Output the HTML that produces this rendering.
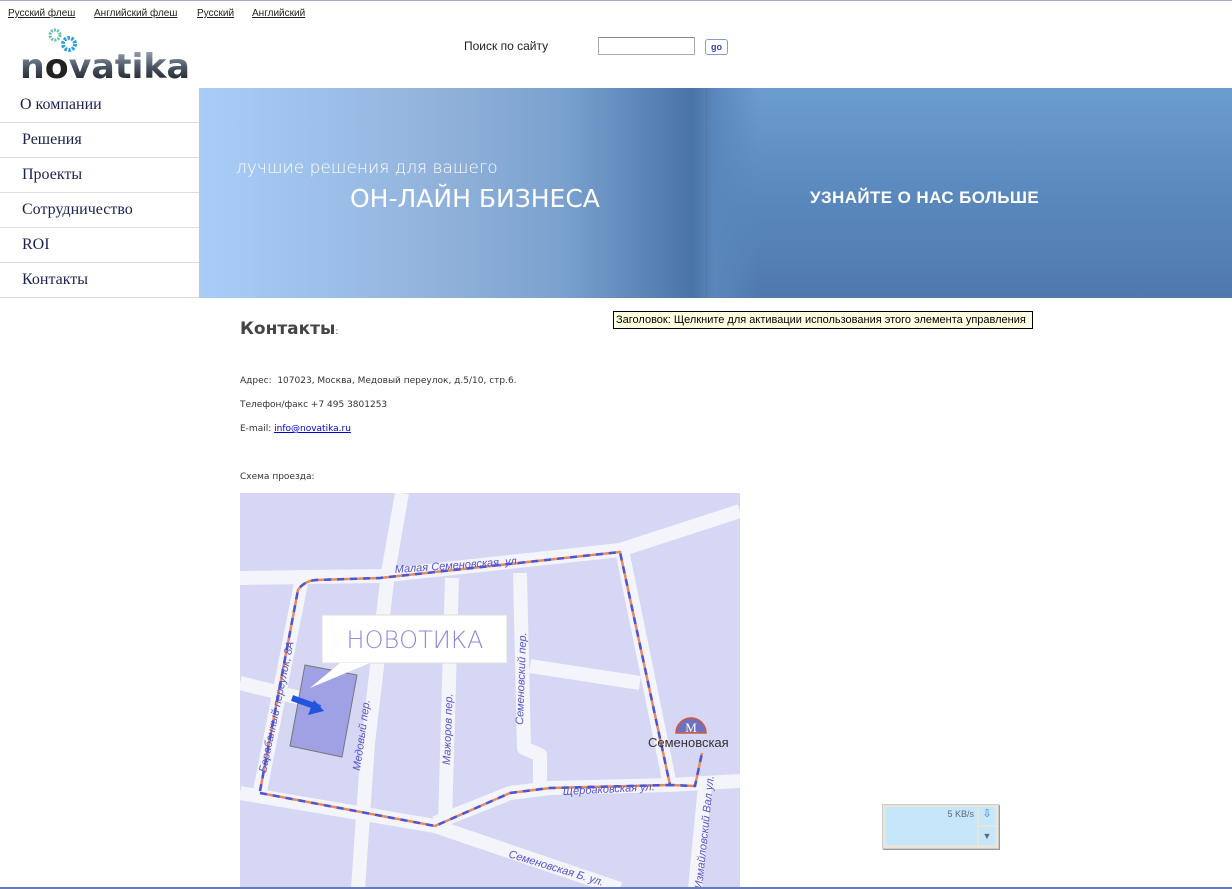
<!DOCTYPE html>
<html><head><meta charset="utf-8"><style>
*{margin:0;padding:0;box-sizing:border-box}
body{width:1232px;height:888px;background:#fff;position:relative;overflow:hidden;font-family:"Liberation Sans","DejaVu Sans",sans-serif;border-top:1px solid #a8a8c8}
.abs{position:absolute}
.top a{position:absolute;top:7px;font-size:10px;color:#222;text-decoration:underline;font-family:"Liberation Sans",sans-serif}
.menu div{position:absolute;left:0;width:199px;height:35px;border-bottom:1px solid #ddd;font-family:"Liberation Serif",serif;font-size:16px;color:#1a2150;padding-left:22px;line-height:34px}
.t{font-family:"DejaVu Sans",sans-serif;font-size:9px;color:#333;position:absolute;left:240px}
</style></head><body>
<div class="top"><a style="left:8px">Русский флеш</a><a style="left:94px">Английский флеш</a><a style="left:197px">Русский</a><a style="left:252px">Английский</a></div>
<svg class="abs" style="left:18px;top:26px" width="175" height="56" viewBox="0 0 175 56">
<defs><linearGradient id="lg" x1="0" y1="0" x2="0" y2="1"><stop offset="0" stop-color="#aab4c2"/><stop offset=".5" stop-color="#4a5566"/><stop offset="1" stop-color="#111"/></linearGradient></defs>
<circle cx="37" cy="8" r="5" fill="none" stroke="#5fc0b0" stroke-width="3" stroke-dasharray="2 1.2"/>
<circle cx="51" cy="17" r="6" fill="none" stroke="#2a9ee0" stroke-width="4" stroke-dasharray="2.4 1.4"/>
<text x="2" y="51" font-family="DejaVu Sans" font-weight="bold" font-size="34" fill="url(#lg)" textLength="170" lengthAdjust="spacingAndGlyphs">n<tspan fill="#222">o</tspan>vatika</text>
</svg>
<div class="abs" style="left:464px;top:38px;font-size:12px;color:#222;font-family:'Liberation Sans',sans-serif">Поиск по сайту</div>
<div class="abs" style="left:598px;top:36px;width:97px;height:18px;border:1px solid #aaa;border-top-color:#888"></div>
<div class="abs" style="left:705px;top:38px;width:23px;height:16px;border:1px solid #8898d8;border-radius:3px;font-size:9px;font-weight:bold;color:#3344aa;text-align:center;line-height:14px">go</div>
<div class="menu">
<div style="top:87px;height:35px;padding-left:20px">О компании</div>
<div style="top:122px">Решения</div>
<div style="top:157px">Проекты</div>
<div style="top:192px">Сотрудничество</div>
<div style="top:227px">ROI</div>
<div style="top:262px">Контакты</div>
</div>
<div class="abs" style="left:199px;top:87px;width:1033px;height:210px;background:linear-gradient(180deg,#6c9dcf 0%,#5a89bd 50%,#5079ae 100%)"></div>
<div class="abs" style="left:199px;top:87px;width:560px;height:210px;background:linear-gradient(90deg,#a9cdf8 0%,#9dc0ea 22%,#8fb1d9 45%,#7aa1cf 65%,#4a74a8 88%,#5a87bb 92%,rgba(100,150,200,0) 100%)"></div>
<div class="abs" style="left:706px;top:87px;width:1px;height:210px;background:#4a6f9e;opacity:.5"></div>
<div class="abs" style="left:236px;top:157px;color:#fff;font-size:17px;font-family:'DejaVu Sans',sans-serif;font-weight:300">лучшие решения для вашего</div>
<div class="abs" style="left:350px;top:183px;color:#fff;font-size:25px;font-family:'DejaVu Sans',sans-serif">ОН-ЛАЙН БИЗНЕСА</div>
<div class="abs" style="left:810px;top:187px;color:#fff;font-size:17px;font-weight:bold;letter-spacing:.4px">УЗНАЙТЕ О НАС БОЛЬШЕ</div>
<div class="abs" style="left:613px;top:310px;border:1px solid #000;background:#ffffe1;font-size:11px;font-family:'Liberation Sans',sans-serif;padding:1px 2px;white-space:nowrap;width:420px;height:18px;line-height:15px;overflow:hidden">Заголовок: Щелкните для активации использования этого элемента управления</div>
<div class="abs" style="left:240px;top:318px;font-size:17px;font-weight:bold;color:#444;font-family:'DejaVu Sans',sans-serif">Контакты<span style="font-size:9px;font-weight:normal">:</span></div>
<div class="t" style="top:375px">Адрес:&nbsp; 107023, Москва, Медовый переулок, д.5/10, стр.6.</div>
<div class="t" style="top:399px">Телефон/факс +7 495 3801253</div>
<div class="t" style="top:423px">E-mail: <span style="color:#00c;text-decoration:underline">info@novatika.ru</span></div>
<div class="t" style="top:471px">Схема проезда:</div>
<svg class="abs" style="left:240px;top:492px" width="500" height="396" viewBox="0 0 500 396">
<rect width="500" height="396" fill="#d6d6f5"/>
<g fill="none" stroke="#f4f4fb" stroke-width="14" stroke-linejoin="round">
<path d="M0 85 L140 83 L380 57 L500 18"/>
<path d="M162 0 L148 80 L128 250 L118 396"/>
<path d="M62 85 L20 298"/>
<path d="M0 190 L60 205"/>
<path d="M0 300 L195 333 L380 396"/>
<path d="M195 330 L270 300 L310 295 L430 292 L500 288"/>
<path d="M212 85 L205 330"/>
<path d="M280 80 L284 255 L300 262 L300 295"/>
<path d="M382 57 L430 292"/>
<path d="M290 173 L400 190"/>
<path d="M465 292 L455 396"/>
</g>
<rect x="82" y="122" width="185" height="48" fill="#fff" stroke="#ddd"/>
<text x="175" y="155" text-anchor="middle" font-family="DejaVu Sans" font-size="24" fill="#8a8ad8" font-weight="300">НОВОТИКА</text>
<polygon points="65,172 117,182 102,264 50,253" fill="#a0a0e4" stroke="#777"/>
<polygon points="100,170 130,170 70,195" fill="#fff"/>
<path d="M52 205 L80 215" stroke="#2255dd" stroke-width="6"/>
<polygon points="74,207 84,218 68,222" fill="#2255dd"/>
<g fill="none" stroke-width="2.5">
<path d="M20 298 L58 97 Q64 88 76 87 L140 85 L380 59 L430 292 L455 293 L462 260 M20 300 L195 333 L270 300 L310 295 L430 292" stroke="#e88a60"/>
<path d="M20 298 L58 97 Q64 88 76 87 L140 85 L380 59 L430 292 L455 293 L462 260 M20 300 L195 333 L270 300 L310 295 L430 292" stroke="#4a55d8" stroke-dasharray="7 6"/>
</g>
<path d="M436 240 A15 15 0 0 1 466 240 Z" fill="#7070c0" stroke="#d05a3a" stroke-width="1.5"/>
<text x="451" y="239" text-anchor="middle" font-family="Liberation Serif" font-size="13" fill="#fff">M</text>
<text x="408" y="254" font-family="Liberation Sans" font-size="13" fill="#333">Семеновская</text>
<g font-family="Liberation Sans" font-style="italic" font-size="11" fill="#5555cc">
<text x="155" y="80" transform="rotate(-4 155 80)">Малая Семеновская, ул.</text>
<text x="26" y="280" transform="rotate(-78 26 280)">Барабанный переулок, 8А</text>
<text x="120" y="278" transform="rotate(-82 120 278)">Медовый пер.</text>
<text x="210" y="272" transform="rotate(-88 210 272)">Мажоров пер.</text>
<text x="283" y="232" transform="rotate(-88 283 232)">Семеновский пер.</text>
<text x="323" y="302" transform="rotate(-3 323 302)">Щербаковская ул.</text>
<text x="268" y="364" transform="rotate(17 268 364)">Семеновская Б. ул.</text>
<text x="462" y="396" transform="rotate(-84 462 396)">Измайловский Вал ул.</text>
</g>
</svg>
<div class="abs" style="left:882px;top:803px;width:117px;height:45px;background:#e8e6dc;border:1px solid #ccc;box-shadow:1px 1px 0 #999"></div>
<div class="abs" style="left:886px;top:806px;width:91px;height:38px;background:#c6e6fa;font-size:9px;color:#667;text-align:right;padding:2px 3px 0 0">5 KB/s</div>
<div class="abs" style="left:979px;top:806px;width:16px;height:18px;background:#c6e6fa;color:#4a7ac8;font-size:11px;text-align:center">⇩</div>
<div class="abs" style="left:979px;top:826px;width:16px;height:18px;background:#c6e6fa;color:#667;font-size:9px;text-align:center;line-height:18px">▼</div>
<div class="abs" style="left:0;top:886px;width:1232px;height:2px;background:#6a7ab8"></div>
</body></html>
